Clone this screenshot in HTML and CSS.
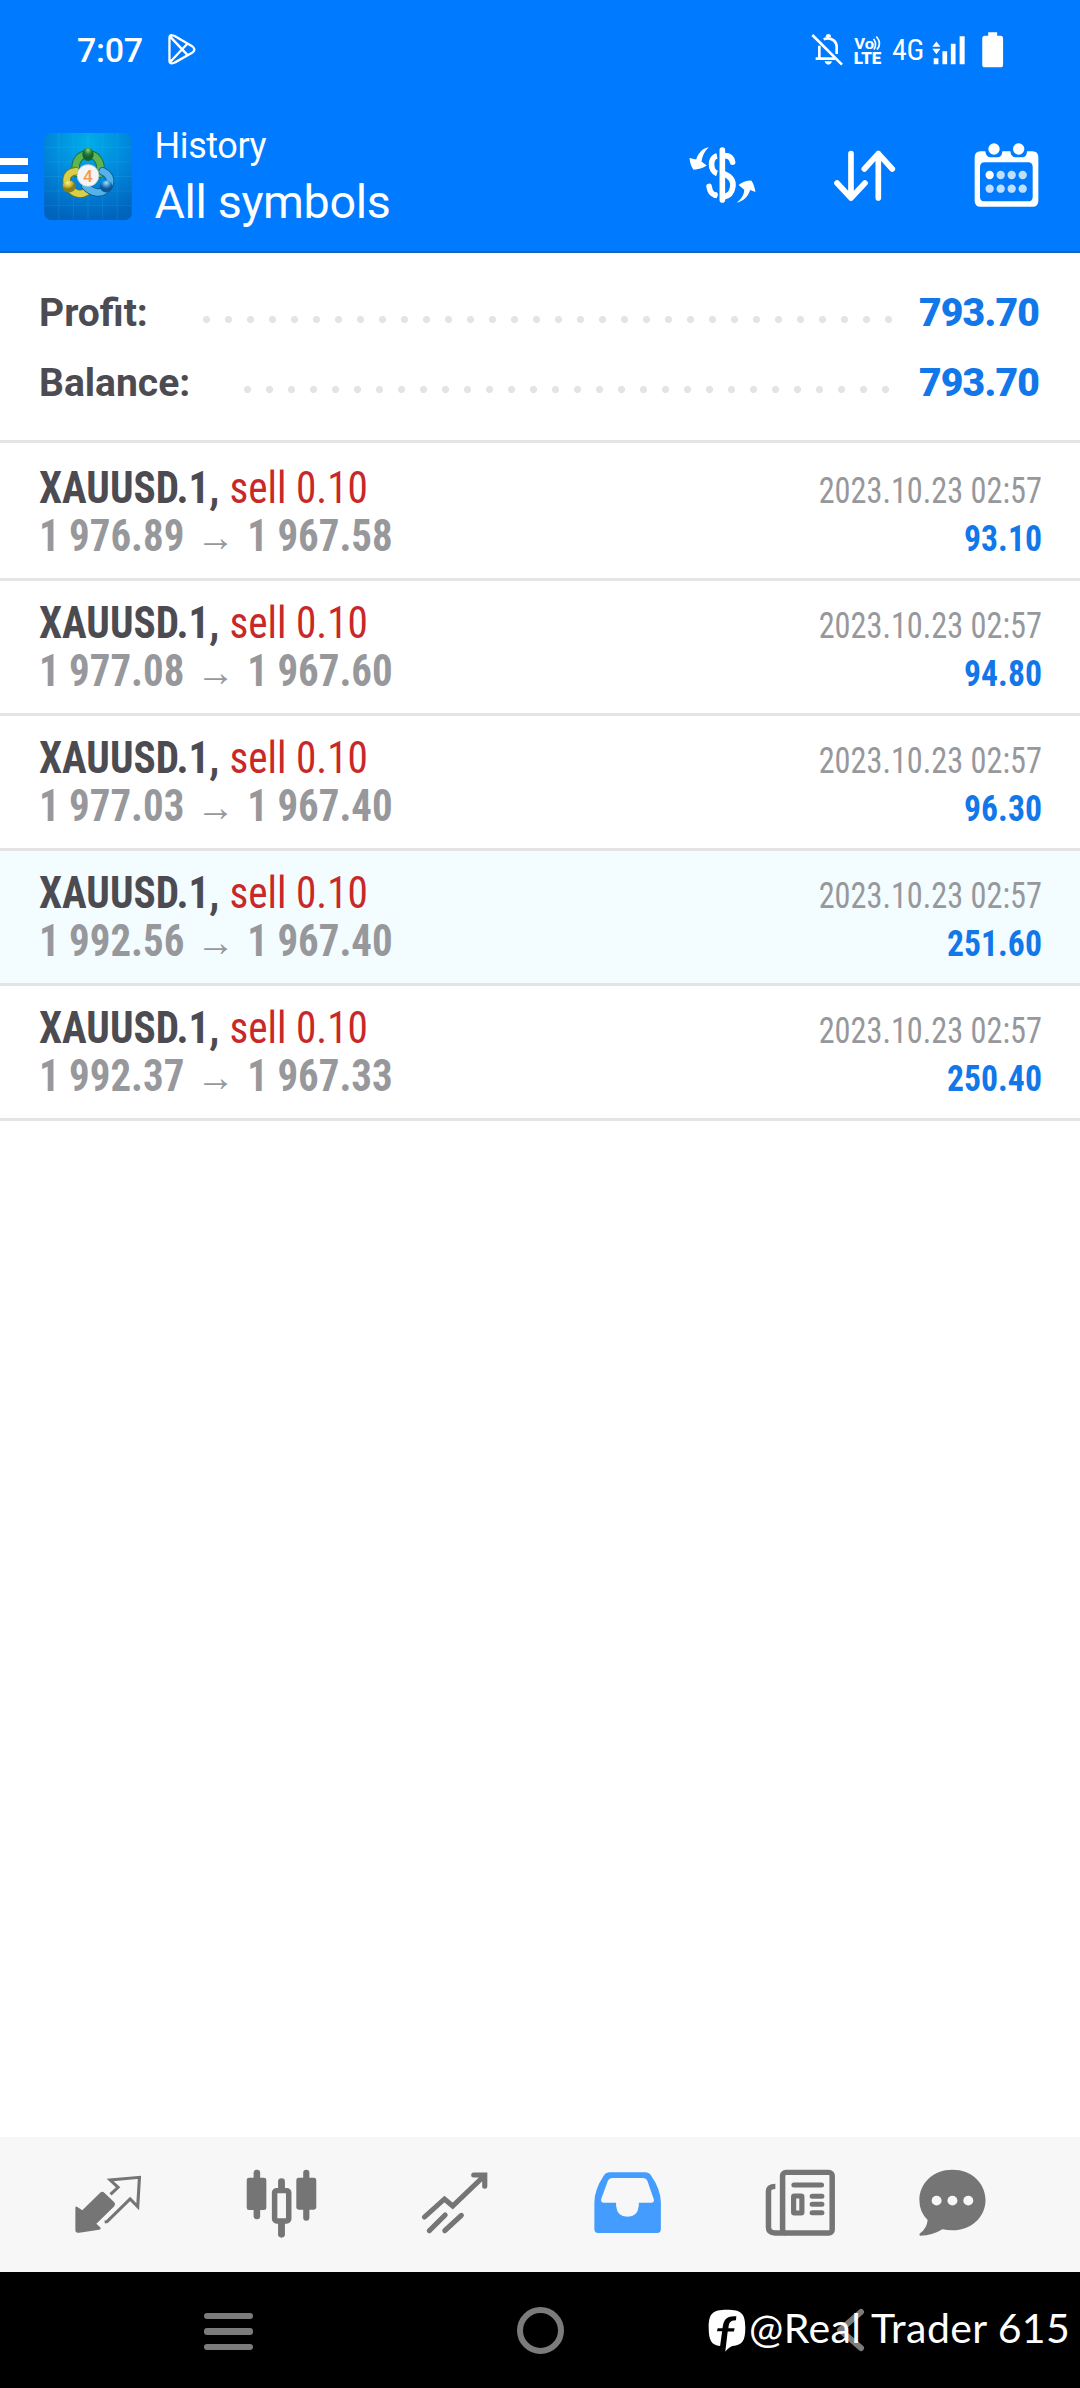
FILE: index.html
```html
<!DOCTYPE html>
<html lang="en">
<head>
<meta charset="utf-8">
<title>History</title>
<link rel="stylesheet" href="styles.css">
</head>
<body>
<div class="screen">
  <header class="header">
    <div class="status">
      <span class="time">7:07</span>
      <svg class="play" viewBox="500 98 90 100" fill="none" stroke="#fff" stroke-width="7" stroke-linejoin="round"><path d="M507 112Q507 104 515 105Q519 105 524 108L577 139Q588 148 577 157L524 187Q519 190 515 190Q507 190 507 183ZM509 109L562 165M509 186L562 130"/></svg>
      <div class="status-icons">
        <svg class="bell" viewBox="450 95 105 105" fill="none" stroke="#fff" stroke-width="8"><path d="M457 104L546 193" stroke-width="8"/><path d="M467 175H526M478 175V136M491 117Q506 110 521 120Q530 127 530 140V161"/><path d="M497 110Q497 101 505 101Q513 101 513 110ZM494 183H516Q513 193 505 193Q497 193 494 183Z" fill="#fff" stroke="none"/></svg>
        <svg class="volte" viewBox="580 100 90 95" fill="#fff"><text x="584" y="146" class="volte-top" textLength="60" lengthAdjust="spacingAndGlyphs">Vo</text><path d="M642 114Q653 131 643 146M650 107Q668 128 652 146" fill="none" stroke="#fff" stroke-width="5"/><text x="582" y="190" class="volte-text" textLength="83" lengthAdjust="spacingAndGlyphs">LTE</text></svg>
        <span class="network">4G</span>
        <svg class="signal" viewBox="812 100 104 95" fill="#fff"><path d="M816 138L828 122L840 138ZM816 144H840L828 160ZM820 172H834V190H820ZM846 151H860V190H846ZM871 129H885V190H871ZM897 107H912V190H897Z"/></svg>
        <svg class="battery" viewBox="960 90 74 115" fill="#fff"><path d="M984 94H1011V104H1021Q1029 104 1029 112V192Q1029 200 1021 200H974Q966 200 966 192V112Q966 104 974 104H984Z"/></svg>
      </div>
    </div>
    <div class="appbar">
      <div class="burger"><i></i><i></i><i></i></div>
      <svg class="logo" viewBox="0 0 264 262">
        <defs>
          <radialGradient id="sky" cx=".5" cy=".1" r=".9"><stop offset="0" stop-color="#00aee9"/><stop offset=".5" stop-color="#0089dc"/><stop offset="1" stop-color="#0064bd"/></radialGradient>
          <radialGradient id="greenBall" cx=".5" cy=".2"><stop offset="0" stop-color="#91d37b"/><stop offset=".6" stop-color="#278239"/><stop offset="1" stop-color="#15642e"/></radialGradient>
          <radialGradient id="goldBall" cx=".4" cy=".2"><stop offset="0" stop-color="#fff08b"/><stop offset=".7" stop-color="#c5b32a"/><stop offset="1" stop-color="#887f1c"/></radialGradient>
          <radialGradient id="blueBall" cx=".5" cy=".2"><stop offset="0" stop-color="#a5ddff"/><stop offset=".7" stop-color="#287fc1"/><stop offset="1" stop-color="#0b5798"/></radialGradient>
        </defs>
        <rect width="264" height="262" rx="20" fill="url(#sky)"/>
        <path d="M44 0V262M88 0V262M132 0V262M176 0V262M220 0V262M0 43H264M0 87H264M0 131H264M0 175H264M0 218H264" stroke="#59c6f5" stroke-opacity=".2" stroke-width="2"/>
        <g fill="none" stroke-linecap="round">
          <path d="M97 120C88 82 110 64 132 64S176 84 168 123" stroke="#1c6a38" stroke-width="25"/>
          <path d="M97 120C88 82 110 64 132 64S176 84 168 123" stroke="#5fb452" stroke-width="20"/>
          <path d="M95 115C62 119 62 150 78 167C93 187 115 186 128 177" stroke="#6c711d" stroke-width="25"/>
          <path d="M95 115C62 119 62 150 78 167C93 187 115 186 128 177" stroke="#d8ce48" stroke-width="20"/>
          <path d="M176 115C206 130 202 152 188 168C168 187 143 180 124 160" stroke="#075b98" stroke-width="25"/>
          <path d="M176 115C206 130 202 152 188 168C168 187 143 180 124 160" stroke="#55b2e8" stroke-width="20"/>
        </g>
        <ellipse cx="132" cy="64" rx="17" ry="20" fill="url(#greenBall)"/>
        <ellipse cx="75" cy="161" rx="20" ry="18" fill="url(#goldBall)"/>
        <ellipse cx="187" cy="161" rx="19" ry="18" fill="url(#blueBall)"/>
        <circle cx="132" cy="128" r="33" fill="#f4f4f4" stroke="#aebcc1" stroke-width="2"/>
        <text x="132" y="147" class="logo-text">4</text>
      </svg>
      <div class="titles">
        <div class="title-small">History</div>
        <div class="title-large">All symbols</div>
      </div>
      <div class="actions">
        <svg class="act-dollar" viewBox="50 80 210 175"><g fill="none" stroke="#fff" stroke-width="17"><path d="M140 110C118 114 118 156 140 163"/><path d="M163 109C179 109 185 117 187 129M116 202C118 215 125 226 134 228" stroke-linecap="round"/><path d="M130 228L140 229M160 163C183 172 191 188 187 206C184 224 175 230 162 233"/><path d="M156 92V243" stroke-linecap="round"/></g><path d="M115 84C98 86 84 100 77 121L57 116C58 130 62 142 69 152C83 151 98 147 109 139L93 127C96 108 103 95 115 84ZM199 251C214 240 222 226 222 212L205 198C214 190 228 184 243 184C250 192 254 206 256 219L240 213C234 232 220 248 199 251Z" fill="#fff"/></svg>
        <svg class="act-sort" viewBox="520 450 190 158" fill="none" stroke="#fff" stroke-width="17" stroke-linecap="round" stroke-linejoin="round"><path d="M574 461V594M532 549L574 594L616 549M656 594V461M614 507L656 461L698 507"/></svg>
        <svg class="act-cal" viewBox="940 425 200 200"><path fill="#fff" fill-rule="evenodd" d="M963 453H977Q979 470 991 471H1015Q1027 470 1028 453H1052Q1054 470 1066 471H1090Q1101 470 1102 453H1118Q1136 453 1136 471V601Q1136 619 1118 619H963Q945 619 945 601V471Q945 453 963 453ZM975 486Q961 486 961 500V589Q961 603 975 603H1105Q1119 603 1119 589V500Q1119 486 1105 486Z"/><g fill="#fff"><circle cx="1003" cy="446" r="17"/><circle cx="1077" cy="446" r="17"/><circle cx="990" cy="524" r="12.5"/></g><g fill="#bfdfff"><circle cx="1023" cy="524" r="12.5"/><circle cx="1056" cy="524" r="12.5"/><circle cx="1089" cy="524" r="12.5"/><circle cx="990" cy="565" r="12.5"/><circle cx="1023" cy="565" r="12.5"/><circle cx="1056" cy="565" r="12.5"/><circle cx="1089" cy="565" r="12.5"/></g></svg>
      </div>
    </div>
  </header>

  <section class="summary">
    <div class="sum-row"><span>Profit:</span><i class="dots dots-profit"></i><b>793.70</b></div>
    <div class="sum-row"><span>Balance:</span><i class="dots dots-balance"></i><b>793.70</b></div>
  </section>

  <main class="deals">
    <article class="deal">
      <div class="deal-main"><div class="symbol">XAUUSD.1, <span class="side">sell 0.10</span></div><div class="prices">1 976.89 <span class="arrow">→</span> 1 967.58</div></div>
      <div class="deal-side"><div class="date">2023.10.23 02:57</div><div class="gain">93.10</div></div>
    </article>
    <article class="deal">
      <div class="deal-main"><div class="symbol">XAUUSD.1, <span class="side">sell 0.10</span></div><div class="prices">1 977.08 <span class="arrow">→</span> 1 967.60</div></div>
      <div class="deal-side"><div class="date">2023.10.23 02:57</div><div class="gain">94.80</div></div>
    </article>
    <article class="deal">
      <div class="deal-main"><div class="symbol">XAUUSD.1, <span class="side">sell 0.10</span></div><div class="prices">1 977.03 <span class="arrow">→</span> 1 967.40</div></div>
      <div class="deal-side"><div class="date">2023.10.23 02:57</div><div class="gain">96.30</div></div>
    </article>
    <article class="deal deal-active">
      <div class="deal-main"><div class="symbol">XAUUSD.1, <span class="side">sell 0.10</span></div><div class="prices">1 992.56 <span class="arrow">→</span> 1 967.40</div></div>
      <div class="deal-side"><div class="date">2023.10.23 02:57</div><div class="gain">251.60</div></div>
    </article>
    <article class="deal">
      <div class="deal-main"><div class="symbol">XAUUSD.1, <span class="side">sell 0.10</span></div><div class="prices">1 992.37 <span class="arrow">→</span> 1 967.33</div></div>
      <div class="deal-side"><div class="date">2023.10.23 02:57</div><div class="gain">250.40</div></div>
    </article>
  </main>

  <nav class="tabs">
    <svg class="tab" viewBox="215 145 200 210" preserveAspectRatio="none"><path fill="#757575" d="M219 264Q219 257 226 263L239 272L291 219Q297 213 303 219L332 248Q337 254 332 260L280 312L291 323Q295 328 288 330L230 339Q219 341 219 332Z"/><path fill="none" stroke="#757575" stroke-width="9" d="M321 224L343 203L320 181L405 173L400 261L378 238L311 306L304 307"/></svg>
    <svg class="tab tab-wide" viewBox="710 145 212 210" preserveAspectRatio="none"><g fill="#757575"><rect x="715" y="174" width="57" height="97" rx="7"/><rect x="735" y="150" width="19" height="149" rx="9"/><rect x="859" y="174" width="58" height="96" rx="7"/><rect x="879" y="150" width="18" height="153" rx="9"/><rect x="806" y="176" width="20" height="40" rx="10"/><rect x="806" y="300" width="20" height="54" rx="10"/></g><rect x="796" y="213" width="41" height="91" rx="6" fill="none" stroke="#757575" stroke-width="16"/></svg>
    <svg class="tab" viewBox="1218 145 200 210" preserveAspectRatio="none"><path fill="none" stroke="#757575" stroke-width="15" stroke-linecap="round" d="M1231 292L1289 238L1313 259L1404 169M1374 166H1406V200M1245 333L1291 286M1290 333L1338 287" stroke-linejoin="miter"/></svg>
    <svg class="tab" viewBox="154 145 200 210" preserveAspectRatio="none"><path fill="#449cff" fill-rule="evenodd" d="M203 158H305Q316 158 323 168Q351 210 351 248V329Q351 340 340 340H169Q158 340 158 329V248Q158 210 185 168Q192 158 203 158ZM211 175Q201 175 197 184L178 237Q175 248 186 249H221V258Q224 291 254 291T287 258V249H323Q334 248 330 237L312 184Q308 175 299 175Z"/></svg>
    <svg class="tab tab-wide" viewBox="652 145 212 210" preserveAspectRatio="none"><g fill="none" stroke="#757575"><rect x="706" y="158" width="144" height="182" rx="10" stroke-width="16"/><path d="M685 200Q665 200 665 215V323Q665 340 684 340H715" stroke-width="16"/><path d="M739 196H819M792 230H820M792 254H820M792 279H820" stroke-width="15" stroke-linecap="round"/><rect x="738" y="229" width="24" height="51" rx="2" stroke-width="15"/></g></svg>
    <svg class="tab" viewBox="1099 145 200 210" preserveAspectRatio="none"><path fill="#757575" d="M1199 150C1254 150 1295 190 1295 241S1254 332 1199 332Q1184 332 1170 329Q1140 348 1106 348Q1100 347 1105 341Q1125 326 1127 301Q1103 277 1103 241C1103 190 1144 150 1199 150Z"/><g fill="#f7f7f7"><circle cx="1153" cy="243" r="14.5"/><circle cx="1199" cy="243" r="14.5"/><circle cx="1245" cy="243" r="14.5"/></g></svg>
  </nav>

  <footer class="system">
    <div class="sys-menu"><i></i><i></i><i></i></div>
    <div class="sys-home"></div>
    <svg class="sys-back" viewBox="0 0 30 46" fill="none" stroke="#7b7b7b" stroke-width="6" stroke-linecap="round" stroke-linejoin="round"><path d="M26 5L5 23L26 41"/></svg>
    <div class="watermark">
      <svg class="wm-icon" viewBox="488 566 110 130" preserveAspectRatio="none"><path fill="#fff" d="M543 568C585 568 596 580 596 622C596 662 588 675 559 678Q549 681 538 695L545 634H563L565 624H547C549 607 551 601 569 600L570 588C541 586 533 598 530 624H516L514 633H529L523 678C498 675 490 661 490 622C490 580 501 568 543 568Z"/></svg>
      <span class="wm-text">@Real Trader 615</span>
    </div>
  </footer>
</div>
</body>
</html>
```

FILE: styles.css
```css
* { box-sizing: border-box; }
body { margin: 0; background: #fff; font-family: Roboto, sans-serif; }
svg { display: block; flex: none; }
.screen { width: 1080px; height: 2388px; display: flex; flex-direction: column; overflow: hidden; }

.header { height: 253px; flex: none; background: #007aff; color: #fff; border-bottom: 2px solid #1067b9; }
.status { height: 99px; display: flex; align-items: center; padding: 0 75px 0 77px; }
.time { width: 90px; font-size: 34px; font-weight: 500; line-height: 40px; letter-spacing: -.3px; padding-top: 1px; }
.play { width: 30px; height: 33px; }
.status-icons { display: flex; align-items: center; margin-left: auto; }
.bell { width: 35px; height: 35px; margin-right: 8px; }
.volte { width: 30px; height: 32px; overflow: visible; }
.volte-top { font: 700 45px Roboto, sans-serif; }
.volte-text { font: 900 52px Roboto, sans-serif; }
.network { width: 48px; padding-left: 9px; font-size: 30px; font-weight: 400; line-height: 36px; font-stretch: 75%; letter-spacing: -.2px; }
.signal { width: 35px; height: 32px; margin-right: 14px; }
.battery { width: 25px; height: 38px; }

.appbar { height: 152px; display: flex; align-items: center; padding-right: 40px; }
.burger { width: 28px; margin-right: 16px; padding-top: 6px; display: flex; flex-direction: column; gap: 9px; }
.burger i { height: 7.6px; background: #fff; }
.logo { width: 88px; height: 87px; margin: 3px 22.5px 0 0; }
.logo-text { font: 500 52px Roboto, sans-serif; fill: #f19a4d; text-anchor: middle; }
.titles { padding-top: 5px; white-space: nowrap; }
.title-small { font-size: 36px; line-height: 48px; letter-spacing: -.4px; }
.title-large { font-size: 46.6px; line-height: 64px; letter-spacing: -.35px; }
.actions { margin-left: auto; display: flex; align-items: center; gap: 76.6px; }
.act-dollar { width: 70px; height: 58px; }
.act-sort { width: 63.3px; height: 52.7px; margin-top: 2px; }
.act-cal { width: 66.7px; height: 66.7px; }

.summary { height: 190px; flex: none; padding: 25px 39px 0; border-bottom: 3px solid #e4e4e4; }
.sum-row { height: 70px; display: flex; font-size: 39px; line-height: 70px; font-weight: 700; color: #4c4b52; }
.sum-row b { width: 122px; letter-spacing: -.8px; color: #1277e8; }
.dots { height: 7px; flex: none; margin: 38px 27px 0 auto; background: radial-gradient(circle at 3.5px 3.5px, #e4e4e4 3.2px, transparent 3.9px) 0 0 / 22px 7px repeat-x; }
.dots-profit { width: 689px; }
.dots-balance { width: 645px; margin-right: 30px; }

.deals { flex: 1; padding-top: 3px; }
.deal { height: 135px; display: flex; justify-content: space-between; padding: 19px 38px 0 39px; border-bottom: 3px solid #e4e4e4; font-stretch: 75%; white-space: nowrap; }
.deal-active { background: #f3fcff; background-clip: padding-box; }
.symbol, .prices { font-size: 43.5px; line-height: 48px; font-weight: 700; color: #4c4b52; transform-origin: left; }
.symbol { transform: scaleX(.948); }
.side { margin-left: .5px; font-weight: 400; color: #c92828; }
.prices { color: #97989c; transform: scaleX(.94); }
.arrow { margin: 0 3px; font: 400 41px/1 "Liberation Sans", sans-serif; }
.deal-side { padding-top: 2px; text-align: right; font-size: 36px; line-height: 48px; }
.date, .gain { transform: scaleX(.897); transform-origin: right; }
.date { color: #97989c; }
.gain { color: #1277e8; font-weight: 700; transform: scaleX(.935); }

.tabs { height: 135px; flex: none; display: grid; grid-template-columns: 173px 173px 173px 173px 173.5px 130.5px; justify-items: center; padding: 31px 0 0 22px; background: #f7f7f7; }
.tab { width: 68.9px; height: 70px; }
.tab-wide { width: 73px; }

.system { position: relative; height: 116px; flex: none; display: flex; align-items: center; padding-left: 204px; background: #000; }
.sys-menu { width: 48.5px; display: flex; flex-direction: column; gap: 9.5px; margin-top: 3px; }
.sys-menu i { height: 6.2px; border-radius: 3px; background: #7b7b7b; }
.sys-home { width: 47px; height: 47px; margin: 1px 0 0 264.5px; border: 6px solid #7b7b7b; border-radius: 50%; }
.sys-back { width: 30px; height: 46px; margin-left: 271px; }
.watermark { position: absolute; left: 708px; top: 37px; display: flex; color: #fff; white-space: nowrap; }
.wm-icon { width: 38px; height: 43px; }
.wm-text { margin: -5px 0 0 3px; font: 400 41px/48px Lato, sans-serif; letter-spacing: .4px; }
```
